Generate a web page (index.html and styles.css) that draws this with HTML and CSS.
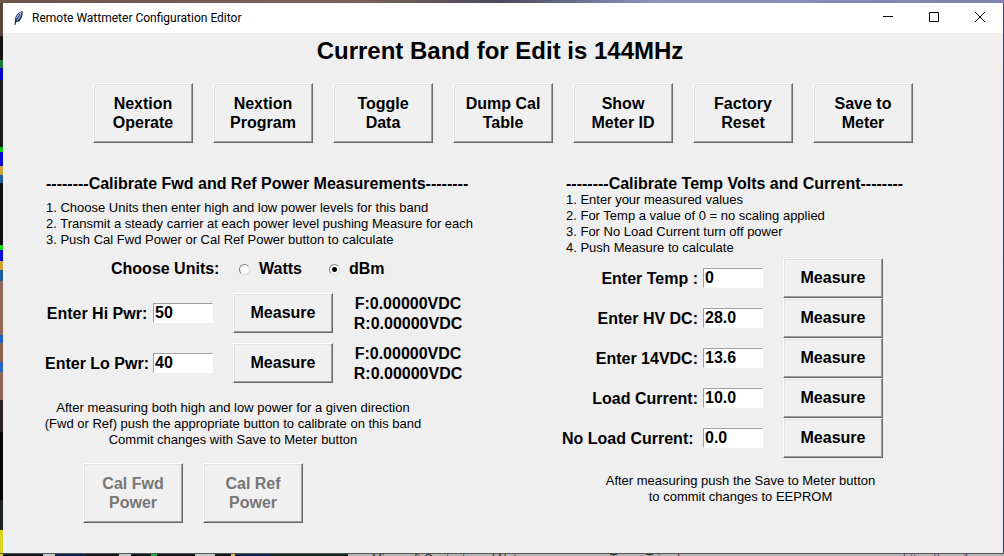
FILE: index.html
```html
<!DOCTYPE html>
<html lang="en">
<head>
<meta charset="utf-8">
<title>Remote Wattmeter Configuration Editor</title>
<link rel="stylesheet" href="styles.css">
</head>
<body>
<div class="window">
  <header class="titlebar">
    <svg class="feather" width="16" height="16" viewBox="0 0 16 16" aria-hidden="true">
      <path d="M3.600 15.500 4 11C3.600 7 6 2.500 11.500 1c.8 3-.4 7.500-3.500 10.500L4.800 12z" fill="#16283e"/>
      <path d="M4.600 10.500C4.600 7 7 3 10.700 1.800 11 5 9.300 9 6.200 11z" fill="#6f9bd0"/>
      <path d="M5.500 8c.8-2.600 2.300-4.500 4.600-5.600C9.800 4.700 8.200 7 5.500 8z" fill="#b9d3f0"/>
      <path d="M3.800 15 5.500 9.500 9 4" fill="none" stroke="#101c2c" stroke-width=".9"/>
    </svg>
    <span class="caption">Remote Wattmeter Configuration Editor</span>
    <div class="controls">
      <button class="control" aria-label="Minimize"><svg width="10" height="10" viewBox="0 0 10 10"><path d="M0 4.500h10" stroke="#000"/></svg></button>
      <button class="control" aria-label="Maximize"><svg width="10" height="10" viewBox="0 0 10 10"><path d="M.5.5h9v9h-9z" fill="none" stroke="#000"/></svg></button>
      <button class="control" aria-label="Close"><svg width="10" height="10" viewBox="0 0 10 10"><path d="M0 0l10 10M10 0 0 10" stroke="#000"/></svg></button>
    </div>
  </header>

  <main class="content">
    <h1 class="band">Current Band for Edit is 144MHz</h1>

    <nav class="toolbar">
      <button class="btn tall">Nextion<br>Operate</button>
      <button class="btn tall">Nextion<br>Program</button>
      <button class="btn tall">Toggle<br>Data</button>
      <button class="btn tall">Dump Cal<br>Table</button>
      <button class="btn tall">Show<br>Meter ID</button>
      <button class="btn tall">Factory<br>Reset</button>
      <button class="btn tall">Save to<br>Meter</button>
    </nav>

    <div class="panels">
      <section class="panel power">
        <h2 class="heading">--------Calibrate Fwd and Ref Power Measurements--------</h2>
        <p class="steps">1. Choose Units then enter high and low power levels for this band<br>2. Transmit a steady carrier at each power level pushing Measure for each<br>3. Push Cal Fwd Power or Cal Ref Power button to calculate</p>

        <div class="units" role="radiogroup" aria-labelledby="units-label">
          <span class="units-label" id="units-label">Choose Units:</span>
          <label class="unit"><input class="radio" type="radio" name="units">Watts</label>
          <label class="unit"><input class="radio" type="radio" name="units" checked>dBm</label>
        </div>

        <div class="levels">
          <div class="row">
            <label class="label" for="hi">Enter Hi Pwr:</label>
            <input class="entry" id="hi" type="text" value="50">
            <button class="btn">Measure</button>
            <output class="reading">F:0.00000VDC<br>R:0.00000VDC</output>
          </div>
          <div class="row">
            <label class="label" for="lo">Enter Lo Pwr:</label>
            <input class="entry" id="lo" type="text" value="40">
            <button class="btn">Measure</button>
            <output class="reading">F:0.00000VDC<br>R:0.00000VDC</output>
          </div>
        </div>

        <p class="note">After measuring both high and low power for a given direction<br>(Fwd or Ref) push the appropriate button to calibrate on this band<br>Commit changes with Save to Meter button</p>

        <div class="commit">
          <button class="btn tall" disabled>Cal Fwd<br>Power</button>
          <button class="btn tall" disabled>Cal Ref<br>Power</button>
        </div>
      </section>

      <section class="panel sensors">
        <h2 class="heading">--------Calibrate Temp Volts and Current--------</h2>
        <p class="steps">1. Enter your measured values<br>2. For Temp a value of 0 = no scaling applied<br>3. For No Load Current turn off power<br>4. Push Measure to calculate</p>

        <div class="values">
          <div class="row">
            <label class="label" for="temp">Enter Temp :</label>
            <input class="entry" id="temp" type="text" value="0">
            <button class="btn">Measure</button>
          </div>
          <div class="row">
            <label class="label" for="hv">Enter HV DC:</label>
            <input class="entry" id="hv" type="text" value="28.0">
            <button class="btn">Measure</button>
          </div>
          <div class="row">
            <label class="label" for="v14">Enter 14VDC:</label>
            <input class="entry" id="v14" type="text" value="13.6">
            <button class="btn">Measure</button>
          </div>
          <div class="row">
            <label class="label" for="load">Load Current:</label>
            <input class="entry" id="load" type="text" value="10.0">
            <button class="btn">Measure</button>
          </div>
          <div class="row">
            <label class="label" for="noload">No Load Current:&nbsp;</label>
            <input class="entry" id="noload" type="text" value="0.0">
            <button class="btn">Measure</button>
          </div>
        </div>

        <p class="note">After measuring push the Save to Meter button<br>to commit changes to EEPROM</p>
      </section>
    </div>
  </main>
</div>
<div class="behind">
  <div class="icons"></div>
  <span class="tab">Microsoft Contacts and Notes</span>
  <span class="tab">Temp. Tsixnder</span>
  <span class="tab link">https://egrp1.sa</span>
</div>
</body>
</html>
```

FILE: styles.css
```css
* {
  box-sizing: border-box;
}

body {
  margin: 0;
  height: 100vh;
  display: flex;
  flex-direction: column;
  overflow: hidden;
  font-family: "Liberation Sans", Arial, sans-serif;
  color: #000;
  background:
    linear-gradient(90deg, #6e5348 0, #7d6258 35%, #4b4a5c 50%, #8c93bd 65%, #7c84ad 100%) 0 0 / 100% 3px no-repeat,
    linear-gradient(#3b4966, #33415c) 100% 0 / 1px 100% no-repeat,
    linear-gradient(
      #5c4339 0 36px, #15130f 36px 60px, #1f7a3a 60px 68px, #0505c8 68px 80px,
      #191c19 80px 147px, #06c40c 147px 152px, #0505d8 152px 166px,
      #d0a334 166px 175px, #1c5ca0 175px 183px, #120e0c 183px 245px,
      #06d40c 245px 250px, #0505d8 250px 261px, #d0a334 261px 270px,
      #1c5ca0 270px 281px, #95695a 281px 335px, #1c62c8 335px 343px,
      #8a6448 343px 362px, #2467c4 362px 372px, #8f6656 372px 400px,
      #2a2422 400px 432px, #050505 432px 500px, #1b241e 500px 530px,
      #d8d420 530px 100%);
}

h1, h2, p {
  margin: 0;
}

button, input {
  font: inherit;
  color: inherit;
}

.window {
  flex: 1;
  margin: 3px 1px 0 3px;
  display: flex;
  flex-direction: column;
  background: #efefef;
}

.titlebar {
  height: 30px;
  display: flex;
  align-items: center;
  padding-left: 8px;
  background: #fff;
}

.feather {
  margin-right: 5px;
}

.caption {
  font-family: Roboto, "Open Sans", sans-serif;
  font-size: 12px;
  line-height: 16px;
}

.controls {
  display: flex;
  align-self: stretch;
  margin-left: auto;
}

.control {
  width: 46px;
  padding: 0 0 2px;
  display: flex;
  align-items: center;
  justify-content: center;
  border: 0;
  background: none;
}

.content {
  font-size: 16px;
  font-weight: bold;
}

.band {
  padding: 4px 6px 0 0;
  font-size: 24px;
  line-height: 28px;
  text-align: center;
}

.toolbar {
  display: flex;
  justify-content: center;
  gap: 20px;
  margin-top: 18px;
}

.btn {
  width: 100px;
  height: 40px;
  padding: 0 0 2px;
  line-height: 19px;
  background: #f0f0f0;
  border: 1px solid;
  border-color: #fff #696969 #696969 #fff;
  box-shadow: inset -1px -1px #a0a0a0, inset 1px 1px #e3e3e3;
}

.btn.tall {
  height: 60px;
  padding: 0;
}

.btn:disabled {
  color: #767676;
}

.panels {
  display: grid;
  grid-template-columns: 515fr 485fr;
  padding-top: 33px;
}

.panel {
  padding-left: 40px;
}

.heading {
  font-size: 16px;
  line-height: 16px;
  white-space: nowrap;
}

.steps,
.note {
  font-size: 13px;
  font-weight: normal;
  line-height: 16px;
  white-space: nowrap;
}

.power .heading,
.power .steps {
  padding-left: 3px;
}

.sensors .heading,
.sensors .steps {
  padding-left: 8px;
}

.power .steps {
  margin-top: 8px;
}

.units {
  display: flex;
  align-items: center;
  margin-top: 11px;
  padding-left: 68px;
  line-height: 20px;
}

.units-label {
  width: 128px;
}

.unit {
  width: 90px;
  display: flex;
  align-items: center;
  gap: 9px;
}

.radio {
  appearance: none;
  width: 11px;
  height: 11px;
  margin: 0;
  border: 1px solid;
  border-color: #808080 #dcdcdc #dcdcdc #808080;
  border-radius: 50%;
  background: #fff;
}

.radio:checked {
  background: radial-gradient(circle, #000 0 2px, #fff 3px);
}

.levels {
  display: grid;
  gap: 10px;
  margin-top: 14px;
}

.row {
  display: flex;
  align-items: center;
}

.label {
  padding-top: 1px;
}

.power .label {
  width: 108px;
  margin-right: 2px;
  text-align: center;
  white-space: nowrap;
}

.sensors .label {
  width: 140px;
  margin-right: 5px;
  text-align: right;
  white-space: nowrap;
}

.entry {
  width: 60px;
  height: 20px;
  margin-right: 20px;
  padding: 0 1px;
  border: 1px solid;
  border-color: #a0a0a0 #fff #fff #a0a0a0;
  border-radius: 0;
  background: #fff;
}

.reading {
  width: 150px;
  padding-top: 2px;
  line-height: 20px;
  text-align: center;
}

.power .row {
  height: 40px;
}

.note {
  text-align: center;
}

.power .note {
  width: 380px;
  margin-top: 17px;
}

.commit {
  display: flex;
  gap: 20px;
  margin-top: 15px;
  padding-left: 40px;
}

.values {
  margin-top: 2px;
}

.sensors .note {
  width: 365px;
  margin-top: 15px;
}

.behind {
  height: 3px;
  display: flex;
  overflow: hidden;
  font-size: 12px;
  line-height: 10px;
  color: #333;
  background: #b4b4b4;
  border-top: 1px solid #555;
}

.icons {
  flex: 0 0 348px;
  height: 3px;
  background: linear-gradient(90deg,
    #d8d420 0 3px, #10151c 3px 43px, #c4c8cc 43px 55px, #0b1e50 55px 86px,
    #10151c 86px 119px, #c4c8cc 119px 131px, #10151c 131px 151px,
    #18b030 151px 157px, #10151c 157px 195px, #c4c8cc 195px 215px,
    #10151c 215px 231px, #d8c040 231px 235px, #0b1e50 235px 270px, #10231e 270px);
}

.tab {
  width: 238px;
  padding-left: 24px;
  white-space: nowrap;
}

.link {
  margin-left: auto;
  width: 101px;
  padding-left: 0;
  color: #704070;
}
```
